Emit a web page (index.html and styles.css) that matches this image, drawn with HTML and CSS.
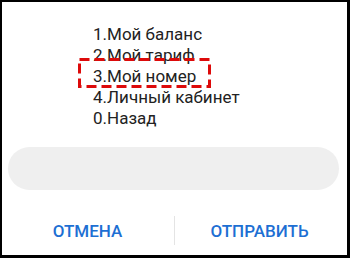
FILE: index.html
```html
<!DOCTYPE html>
<html lang="ru">
<head>
<meta charset="utf-8">
<link rel="stylesheet" href="styles.css">
</head>
<body>
<div class="frame">
  <div class="menu">
    <div class="item">1.Мой баланс</div>
    <div class="item">2.Мой тариф</div>
    <div class="item"><span class="marked">3.Мой номер<svg class="dash" width="133" height="30" viewBox="0 0 133 30"><rect x="1.5" y="1.5" width="130" height="27" fill="none" stroke="#dd0a0a" stroke-width="3" stroke-dasharray="10 5"/></svg></span></div>
    <div class="item">4.Личный кабинет</div>
    <div class="item">0.Назад</div>
  </div>
  <div class="input"></div>
  <div class="actions">
    <div class="btn">ОТМЕНА</div>
    <div class="divider"></div>
    <div class="btn">ОТПРАВИТЬ</div>
  </div>
</div>
</body>
</html>
```
FILE: styles.css
```css
html, body {
  margin: 0;
  padding: 0;
  background: #000;
}
.frame {
  box-sizing: border-box;
  width: 350px;
  height: 258px;
  background: #fff;
  border-style: solid;
  border-color: #000;
  border-width: 2px 3px 3px 2px;
  display: flex;
  flex-direction: column;
  font-family: Roboto, "Noto Sans", sans-serif;
}
.menu {
  padding: 22px 0 0 91px;
  font-size: 17px;
  line-height: 21px;
  color: #222;
}
.item {
  height: 21px;
  white-space: nowrap;
}
.marked {
  position: relative;
  display: inline-block;
}
.dash {
  position: absolute;
  left: -15px;
  top: -8px;
}
.input {
  margin: 18px 8px 0 6px;
  height: 43px;
  border-radius: 22px;
  background: #efefef;
}
.actions {
  margin-top: 20px;
  height: 41px;
  display: grid;
  grid-template-columns: 1fr 1px 1fr;
  align-items: center;
}
.btn {
  text-align: center;
  font-size: 17px;
  font-weight: 500;
  color: #1d6fd3;
  letter-spacing: 0;
}
.btn:first-child {
  padding-right: 1px;
}
.btn:last-child {
  padding-right: 3px;
}
.divider {
  height: 29px;
  background: #e4e4e4;
}
```
